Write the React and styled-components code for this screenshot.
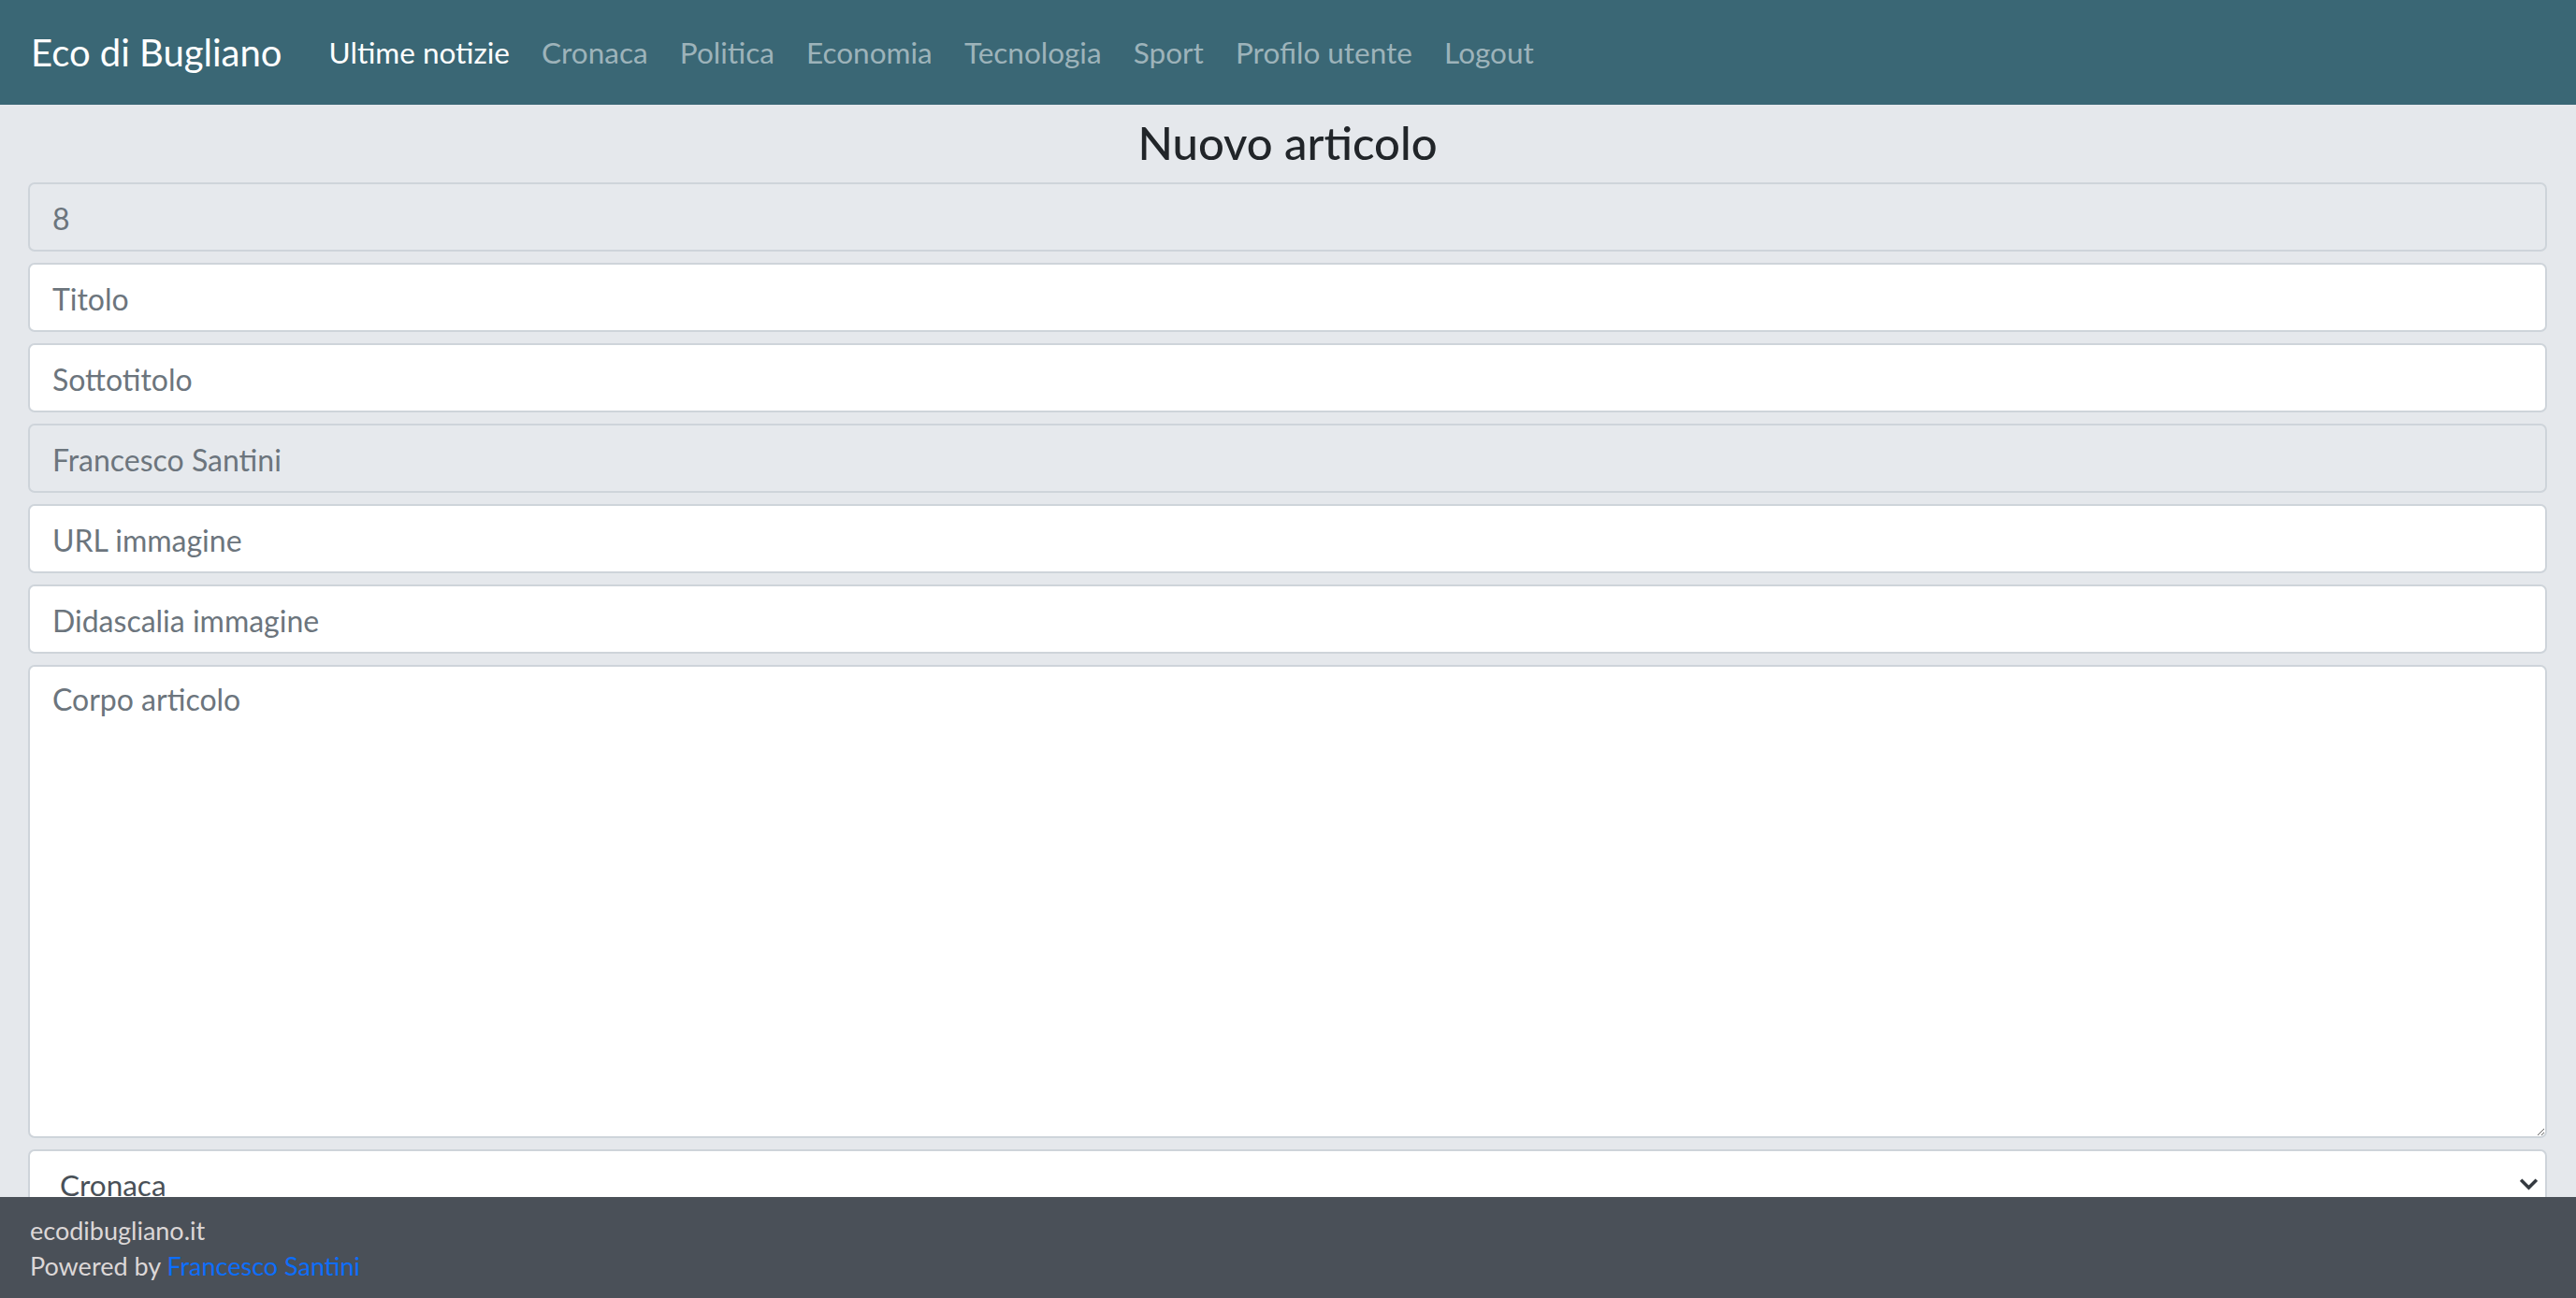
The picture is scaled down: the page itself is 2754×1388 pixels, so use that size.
import React from 'react';
import styled, { createGlobalStyle } from 'styled-components';

const GlobalStyle = createGlobalStyle`
  * { box-sizing: border-box; }
  body {
    margin: 0;
    background: #e5e8ec;
    font-family: Lato, "Open Sans", sans-serif;
    color: #212529;
  }
`;

const Page = styled.div`
  display: flex;
  flex-direction: column;
  height: 100vh;
  overflow: hidden;
`;

const Navbar = styled.nav`
  flex: none;
  height: 112px;
  display: flex;
  align-items: center;
  padding-left: 33px;
  background: #3a6775;
`;

const Brand = styled.a`
  margin-right: 33px;
  font-size: 40px;
  color: #fff;
  text-decoration: none;
  white-space: nowrap;
`;

const NavList = styled.ul`
  display: flex;
  margin: 0;
  padding: 0;
  list-style: none;
`;

const NavLink = styled.a`
  display: block;
  padding: 0 17.1px;
  font-size: 31.5px;
  color: ${({ $active }) => ($active ? '#fff' : '#9db3ba')};
  text-decoration: none;
  white-space: nowrap;
`;

const Main = styled.main`
  flex: 1;
  min-height: 0;
  overflow: hidden;
  padding: 0 31px 0 30px;
`;

const Title = styled.h2`
  margin: 11px 0 13px;
  font-size: 49px;
  font-weight: 500;
  line-height: 1.2;
  text-align: center;
`;

const Form = styled.form`
  display: flex;
  flex-direction: column;
  gap: 12px;
`;

const fieldBase = `
  width: 100%;
  border: 2px solid #ced4da;
  border-radius: 7px;
  font-family: Lato, "Open Sans", sans-serif;
  font-size: 32px;
  outline: none;
  &::placeholder { color: #6c757d; opacity: 1; }
`;

const Input = styled.input`
  ${fieldBase}
  height: 74px;
  padding: 3px 24px 0;
  color: #6c757d;
  background: ${({ disabled }) => (disabled ? '#e6e9ed' : '#fff')};
  -webkit-text-fill-color: #6c757d;
`;

const TextArea = styled.textarea`
  ${fieldBase}
  display: block;
  height: 506px;
  padding: 11px 24px;
  line-height: 1.5;
  background: #fff;
  resize: vertical;
`;

const SelectWrap = styled.div`
  position: relative;
`;

const Select = styled.select`
  ${fieldBase}
  height: 74px;
  padding: 3px 60px 0 32px;
  font-size: 31.5px;
  color: #495057;
  background: #fff;
  appearance: none;
`;

const Chevron = styled.svg`
  position: absolute;
  right: 10px;
  top: 31px;
  width: 19px;
  height: 13px;
  pointer-events: none;
`;

const Footer = styled.footer`
  flex: none;
  height: 108px;
  padding: 17px 32px 15px;
  background: #4a5058;
  color: #dcd7d7;
  font-size: 27px;
  line-height: 38px;
`;

const FooterLink = styled.a`
  color: #0d6efd;
  text-decoration: none;
`;

const links = ['Ultime notizie', 'Cronaca', 'Politica', 'Economia', 'Tecnologia', 'Sport', 'Profilo utente', 'Logout'];

export default function App() {
  return (
    <Page>
      <GlobalStyle />
      <Navbar>
        <Brand href="#">Eco di Bugliano</Brand>
        <NavList>
          {links.map((label, i) => (
            <li key={label}>
              <NavLink href="#" $active={i === 0}>{label}</NavLink>
            </li>
          ))}
        </NavList>
      </Navbar>
      <Main>
        <Title>Nuovo articolo</Title>
        <Form>
          <Input disabled value="8" readOnly />
          <Input placeholder="Titolo" />
          <Input placeholder="Sottotitolo" />
          <Input disabled value="Francesco Santini" readOnly />
          <Input placeholder="URL immagine" />
          <Input placeholder="Didascalia immagine" />
          <TextArea placeholder="Corpo articolo" />
          <SelectWrap>
            <Select defaultValue="Cronaca">
              <option>Cronaca</option>
              <option>Politica</option>
              <option>Economia</option>
              <option>Tecnologia</option>
              <option>Sport</option>
            </Select>
            <Chevron viewBox="0 0 16 11" fill="none">
              <path d="M2 2.5l6 6 6-6" stroke="#343a40" strokeWidth="3" strokeLinecap="square" />
            </Chevron>
          </SelectWrap>
        </Form>
      </Main>
      <Footer>
        <div>ecodibugliano.it</div>
        <div>
          Powered by <FooterLink href="#">Francesco Santini</FooterLink>
        </div>
      </Footer>
    </Page>
  );
}
